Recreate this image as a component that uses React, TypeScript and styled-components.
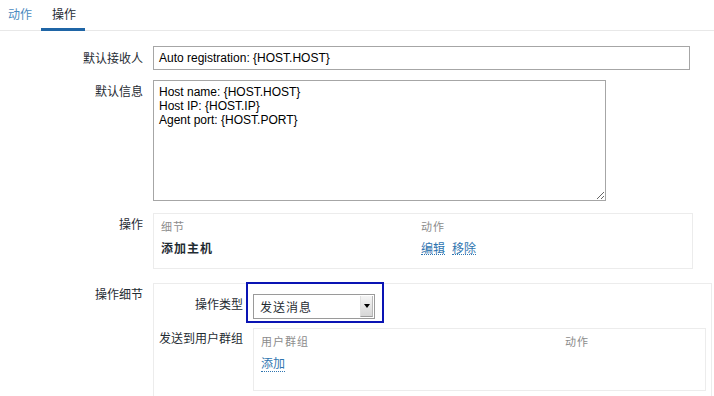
import styled, { createGlobalStyle } from 'styled-components';

const GlobalStyle = createGlobalStyle`
    body {
        margin: 0;
        background: #fff;
        font-family: "Noto Sans CJK SC", "Liberation Sans", sans-serif;
        font-size: 12px;
        color: #1f2c33;
    }
`;

const Page = styled.div`
    width: 714px;
    height: 396px;
    overflow: hidden;
`;

const Tabs = styled.div`
    display: flex;
    height: 30px;
    border-bottom: 1px solid #e8e8e8;
`;

const Tab = styled.div<{ $active?: boolean }>`
    box-sizing: border-box;
    height: 31px;
    padding: 5px 9px 0 ${p => p.$active ? 11 : 8}px;
    color: ${p => p.$active ? '#1f2c33' : '#4a8ac0'};
    border-bottom: 3px solid ${p => p.$active ? '#1f65a6' : 'transparent'};
    font-size: 12px;
`;

const Form = styled.div`
    display: grid;
    grid-template-columns: 143px 1fr;
    column-gap: 10px;
    padding-top: 15px;
`;

const Label = styled.div<{ $top: number }>`
    text-align: right;
    padding-top: ${p => p.$top}px;
    line-height: 16px;
`;

const Field = styled.div<{ $gap: number }>`
    margin-bottom: ${p => p.$gap}px;
`;

const TextInput = styled.div`
    box-sizing: border-box;
    width: 537px;
    height: 24px;
    border: 1px solid #a6a6a6;
    padding: 3px 5px;
    font-family: "Liberation Sans", Arial, sans-serif;
    font-size: 12px;
    line-height: 16px;
    color: #000;
`;

const TextArea = styled.textarea`
    box-sizing: border-box;
    display: block;
    width: 453px;
    height: 121px;
    margin: 0;
    border: 1px solid #a6a6a6;
    padding: 4px 5px;
    font-family: "Liberation Sans", Arial, sans-serif;
    font-size: 12px;
    line-height: 14px;
    color: #000;
    outline: none;
`;

const Box = styled.div<{ $w: number; $h?: number }>`
    box-sizing: border-box;
    width: ${p => p.$w}px;
    ${p => p.$h ? `height: ${p.$h}px;` : ''}
    border: 1px solid #ececec;
    padding: 2px 7px 0;
`;

const BoxRow = styled.div<{ $cols: string; $h: number }>`
    display: grid;
    grid-template-columns: ${p => p.$cols};
    height: ${p => p.$h}px;
    align-items: center;
`;

const Head = styled.span`
    color: #8c8c8c;
    font-size: 11px;
    letter-spacing: 1px;
`;

const Bold = styled.span`
    font-weight: bold;
    letter-spacing: 1px;
`;

const Links = styled.div`
    display: flex;
    gap: 7px;
`;

const Link = styled.span`
    color: #2f75b0;
    border-bottom: 1px dotted #2f75b0;
    line-height: 13px;
`;

const Details = styled.div`
    box-sizing: border-box;
    width: 559px;
    height: 130px;
    border-top: 1px solid #ececec;
    border-left: 1px solid #ececec;
    border-right: 1px solid #ececec;
    display: grid;
    grid-template-columns: 89px 1fr;
    column-gap: 10px;
    align-content: start;
`;

const SubLabel = styled.div<{ $top: number }>`
    text-align: right;
    padding-top: ${p => p.$top}px;
    line-height: 16px;
    white-space: nowrap;
`;

const Focus = styled.div`
    box-sizing: border-box;
    width: 138px;
    height: 41px;
    margin: -2px 0 0 -7px;
    border: 2px solid #0a14b4;
    padding: 10px 7px 0 5px;
`;

const Select = styled.div`
    box-sizing: border-box;
    display: flex;
    width: 122px;
    height: 25px;
    border: 1px solid #9a9a9a;
    background: #fff;
`;

const SelectText = styled.div`
    flex: 1;
    padding: 4px 6px;
    line-height: 16px;
    letter-spacing: 1px;
`;

const Arrow = styled.div`
    width: 11px;
    margin: 1px;
    background: linear-gradient(#f4f4f4, #d6d6d6);
    border-left: 1px solid #e0e0e0;
    border-right: 1px solid #b8b8b8;
    border-bottom: 1px solid #9c9c9c;
    display: flex;
    align-items: center;
    justify-content: center;
    &::after {
        content: '';
        border-left: 3px solid transparent;
        border-right: 3px solid transparent;
        border-top: 4px solid #000;
    }
`;

const GroupBox = styled(Box)`
    margin-top: 5px;
`;

export default function App() {
    return (
        <Page>
            <GlobalStyle />
            <Tabs>
                <Tab>动作</Tab>
                <Tab $active>操作</Tab>
            </Tabs>
            <Form>
                <Label $top={4}>默认接收人</Label>
                <Field $gap={10}>
                    <TextInput>Auto registration: {'{HOST.HOST}'}</TextInput>
                </Field>

                <Label $top={3}>默认信息</Label>
                <Field $gap={12}>
                    <TextArea readOnly defaultValue={'Host name: {HOST.HOST}\nHost IP: {HOST.IP}\nAgent port: {HOST.PORT}'} />
                </Field>

                <Label $top={3}>操作</Label>
                <Field $gap={14}>
                    <Box $w={540} $h={56}>
                        <BoxRow $cols="260px 1fr" $h={19}>
                            <Head>细节</Head>
                            <Head>动作</Head>
                        </BoxRow>
                        <BoxRow $cols="260px 1fr" $h={25}>
                            <Bold>添加主机</Bold>
                            <Links>
                                <Link>编辑</Link>
                                <Link>移除</Link>
                            </Links>
                        </BoxRow>
                    </Box>
                </Field>

                <Label $top={3}>操作细节</Label>
                <Field $gap={0}>
                    <Details>
                        <SubLabel $top={12}>操作类型</SubLabel>
                        <Focus>
                            <Select>
                                <SelectText>发送消息</SelectText>
                                <Arrow />
                            </Select>
                        </Focus>
                        <SubLabel $top={7}>发送到用户群组</SubLabel>
                        <GroupBox $w={453} $h={63}>
                            <BoxRow $cols="304px 1fr" $h={19}>
                                <Head>用户群组</Head>
                                <Head>动作</Head>
                            </BoxRow>
                            <BoxRow $cols="1fr" $h={25}>
                                <div><Link>添加</Link></div>
                            </BoxRow>
                        </GroupBox>
                    </Details>
                </Field>
            </Form>
        </Page>
    );
}
